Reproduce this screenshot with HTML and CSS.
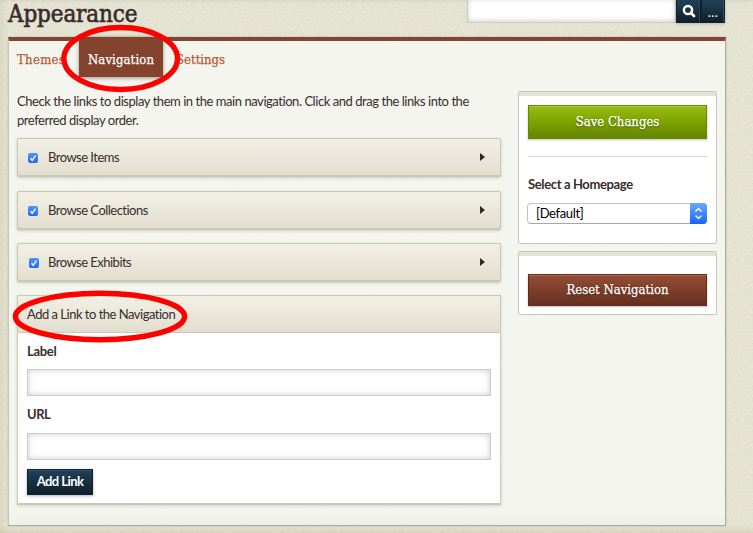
FILE: index.html
```
<!DOCTYPE html>
<html lang="en">
<head>
<meta charset="utf-8">
<title>Appearance</title>
<link rel="stylesheet" href="styles.css">
</head>
<body>
<header class="top">
  <h1>Appearance</h1>
  <form class="search">
    <input type="text" aria-label="Search">
    <button type="button" class="navy" aria-label="Submit search"><svg width="14" height="14" viewBox="0 0 14 14"><circle cx="6" cy="6" r="4.1" fill="none" stroke="#fff" stroke-width="2.5"/><path d="M9 9l3 3" stroke="#fff" stroke-width="2.8" stroke-linecap="round"/></svg></button>
    <button type="button" class="navy more">...</button>
  </form>
</header>
<main class="panel">
  <nav class="tabs">
    <a class="tab themes">Themes</a>
    <a class="tab active">Navigation</a>
    <a class="tab settings">Settings</a>
  </nav>
  <div class="columns">
    <section class="content">
      <p>Check the links to display them in the main navigation. Click and drag the links into the<br>preferred display order.</p>
      <div class="row first"><i class="check"><svg viewBox="0 0 10 10"><path d="M2.5 5.3L4.2 7.3L7.5 2.6"/></svg></i><span>Browse Items</span><i class="arrow"></i></div>
      <div class="row"><i class="check"><svg viewBox="0 0 10 10"><path d="M2.5 5.3L4.2 7.3L7.5 2.6"/></svg></i><span>Browse Collections</span><i class="arrow"></i></div>
      <div class="row last"><i class="check"><svg viewBox="0 0 10 10"><path d="M2.5 5.3L4.2 7.3L7.5 2.6"/></svg></i><span>Browse Exhibits</span><i class="arrow"></i></div>
      <div class="add">
        <div class="add-head">Add a Link to the Navigation</div>
        <div class="add-body">
          <label for="label">Label</label>
          <input id="label" type="text">
          <label for="url" class="url">URL</label>
          <input id="url" type="text">
          <button type="button" class="navy add-btn">Add Link</button>
        </div>
      </div>
    </section>
    <aside>
      <div class="card save">
        <button type="button" class="big green">Save Changes</button>
        <hr>
        <div class="side-label">Select a Homepage</div>
        <div class="select"><span>[Default]</span><i><svg width="17" height="21" viewBox="0 0 17 21"><path d="M5.5 8.5l3-3 3 3M5.5 12.5l3 3 3-3" fill="none" stroke="#fff" stroke-width="1.3"/></svg></i></div>
      </div>
      <div class="card reset">
        <button type="button" class="big brown">Reset Navigation</button>
      </div>
    </aside>
  </div>
</main>
<svg class="marks" width="753" height="533" viewBox="0 0 753 533"><ellipse cx="120.7" cy="58.5" rx="56.8" ry="31"/><ellipse cx="100" cy="316.5" rx="84.6" ry="23.2"/></svg>
</body>
</html>
```
FILE: styles.css
```
* { box-sizing: border-box; }
:root {
  --slab: "DejaVu Serif Condensed", "DejaVu Serif", serif;
  --paper: url("data:image/svg+xml,%3Csvg xmlns='http://www.w3.org/2000/svg' width='160' height='160'%3E%3Cfilter id='n'%3E%3CfeTurbulence type='fractalNoise' baseFrequency='.45' numOctaves='2' stitchTiles='stitch'/%3E%3CfeColorMatrix values='0 0 0 0 .45 0 0 0 0 .43 0 0 0 0 .3 .3 0 0 0 -.08'/%3E%3C/filter%3E%3Crect width='160' height='160' filter='url(%23n)'/%3E%3C/svg%3E");
}
body {
  margin: 0; height: 533px; overflow: hidden; position: relative;
  font: 13px/19px Lato, sans-serif; letter-spacing: -.45px; font-variant-ligatures: none; color: #382d2b;
  background: var(--paper), linear-gradient(90deg, rgba(150,145,100,.12), transparent 9px), linear-gradient(#dadacb, #e8e6d6 3px, #e8e6d6 525px, #dad7c1);
}
button, input { font: inherit; letter-spacing: inherit; margin: 0; }
.top { height: 37px; margin: 0 28px 0 8px; display: flex; justify-content: space-between; align-items: flex-start; }
h1 { margin: 0; font: 24px/28px var(--slab); font-stretch: condensed; letter-spacing: -.15px; -webkit-text-stroke: .6px; white-space: nowrap; }
.search { display: flex; height: 23px; }
.search input { width: 209px; height: 23px; border: 1px solid #ccc; border-top: 0; background: #fff; box-shadow: inset 0 -1px 5px #ccc; }
.navy { border: 1px solid #10222f; color: #fff; background: linear-gradient(#20415a, #10202b); padding: 0; box-shadow: inset 0 1px #375063, 0 1px 3px rgba(0,0,0,.3); }
.search button { width: 25px; height: 23px; border-top: 0; display: flex; align-items: center; justify-content: center; box-shadow: inset -1px 0 #2e4b5f, 0 1px 3px rgba(0,0,0,.2); }
.search .more { width: 24px; padding-top: 3px; letter-spacing: .5px; }
.panel { width: 718px; height: 489px; margin-left: 8px; border: solid #aaaca2; border-width: 0 1px 1px; border-top: 4px solid #84432c; background: linear-gradient(rgba(247,248,243,.86), rgba(247,248,243,.86) 470px, rgba(240,242,234,.86)); box-shadow: 0 0 2px rgba(0,0,0,.18); border-left-color: #c7c6b5; }
.tabs { display: flex; height: 51px; padding-left: 8px; font: 13px/37px var(--slab); font-stretch: condensed; letter-spacing: 0; color: #b35b37; -webkit-text-stroke: .25px; }
.tab { height: 36px; white-space: nowrap; }
.tab.themes { width: 62px; letter-spacing: .3px; }
.tab.active { width: 84px; height: 40px; margin-top: -4px; padding-top: 4px; padding-left: 9px; letter-spacing: .1px; color: #fff; background: #84432c; box-shadow: 0 1px 4px rgba(0,0,0,.4); }
.tab.settings { margin-left: 13px; }
.columns { display: flex; justify-content: space-between; padding: 0 8px; }
.content { width: 484px; }
p { margin: 0 0 8px; white-space: nowrap; }
.row, .add-head { background: linear-gradient(#f2f0e6, #e2decf); }
.row { display: flex; align-items: center; height: 39px; margin-bottom: 13px; padding: 0 15px 0 10px; border: 1px solid #c7c9b1; border-bottom-width: 2px; border-radius: 2px; box-shadow: 0 1px 3px rgba(80,80,50,.25); }
.row.first { margin-bottom: 14px; }
.row span { padding-top: 1px; letter-spacing: -.52px; }
.check { width: 10px; height: 10px; margin: 2px 10px 0 0; border-radius: 2px; background: linear-gradient(#4d94fb, #216bf5); display: flex; }
.check path { fill: none; stroke: #fff; stroke-width: 1.4; }
.row.last .check { margin-left: 1px; margin-right: 9px; }
.arrow { margin-left: auto; border: solid transparent; border-width: 4.5px 0 4.5px 5.5px; border-left-color: #302725; }
.add { height: 210px; border: 1px solid #c9cab3; border-bottom-width: 2px; background: #fff; box-shadow: 0 1px 3px rgba(80,80,50,.2); }
.add-head { height: 37px; line-height: 37px; padding-left: 9px; letter-spacing: -.5px; border-bottom: 1px solid #c9cab3; }
.add-body { padding: 9px 9px 0; }
label { display: block; font-weight: bold; height: 27px; letter-spacing: -.3px; }
label.url { line-height: 17px; letter-spacing: -.5px; }
.add-body input { display: block; width: 464px; height: 27px; border: 1px solid #ccc; box-shadow: inset 0 0 6px #ccc; margin-bottom: 10px; padding: 0 5px; }
.add-body input:last-of-type { margin-bottom: 9px; }
.add-btn { width: 66px; height: 26px; padding-bottom: 1px; font-weight: bold; text-align: center; letter-spacing: -.55px; }
aside { width: 199px; }
.card { border: 1px solid #c4c6bf; border-radius: 2px; background: #fff; box-shadow: inset 0 4px #e3e4d2; padding: 0 9px; }
.save { height: 153px; margin-top: -1px; padding-top: 13px; margin-bottom: 7px; }
.reset { height: 64px; padding-top: 22px; }
.big { display: block; width: 179px; color: #fff; font: 13px/20px var(--slab); font-stretch: condensed; letter-spacing: 0; -webkit-text-stroke: .25px; padding: 0; text-shadow: 0 1px 2px rgba(0,0,0,.5); }
.green { height: 34px; border: 1px solid #678800; background: linear-gradient(#97bd16, #83a900 40%, #648400); box-shadow: inset 0 1px #a9c944, 0 1px 2px rgba(0,0,0,.25); }
.brown { height: 32px; border: 1px solid #662b1d; background: linear-gradient(#954d34, #66301f); box-shadow: inset 0 1px #a86a54, 0 1px 2px rgba(0,0,0,.25); }
hr { border: 0; border-top: 1px solid #ddd; margin: 17px 0 18px; }
.side-label { font-weight: bold; height: 28px; white-space: nowrap; letter-spacing: -.37px; }
.select { display: flex; justify-content: space-between; width: 180px; height: 21px; margin-left: -1px; border: 1px solid #c2c2c2; border-bottom-color: #a8a8a8; border-radius: 4px; color: #000; padding-left: 8px; letter-spacing: -.35px; }
.select i { width: 17px; height: 21px; margin: -1px -1px 0 0; border-radius: 0 4px 4px 0; background: linear-gradient(#69aafa, #1763ff); }
.marks { position: absolute; left: 0; top: 0; pointer-events: none; }
.marks ellipse { fill: none; stroke: #f00; stroke-width: 5.4; }
```
